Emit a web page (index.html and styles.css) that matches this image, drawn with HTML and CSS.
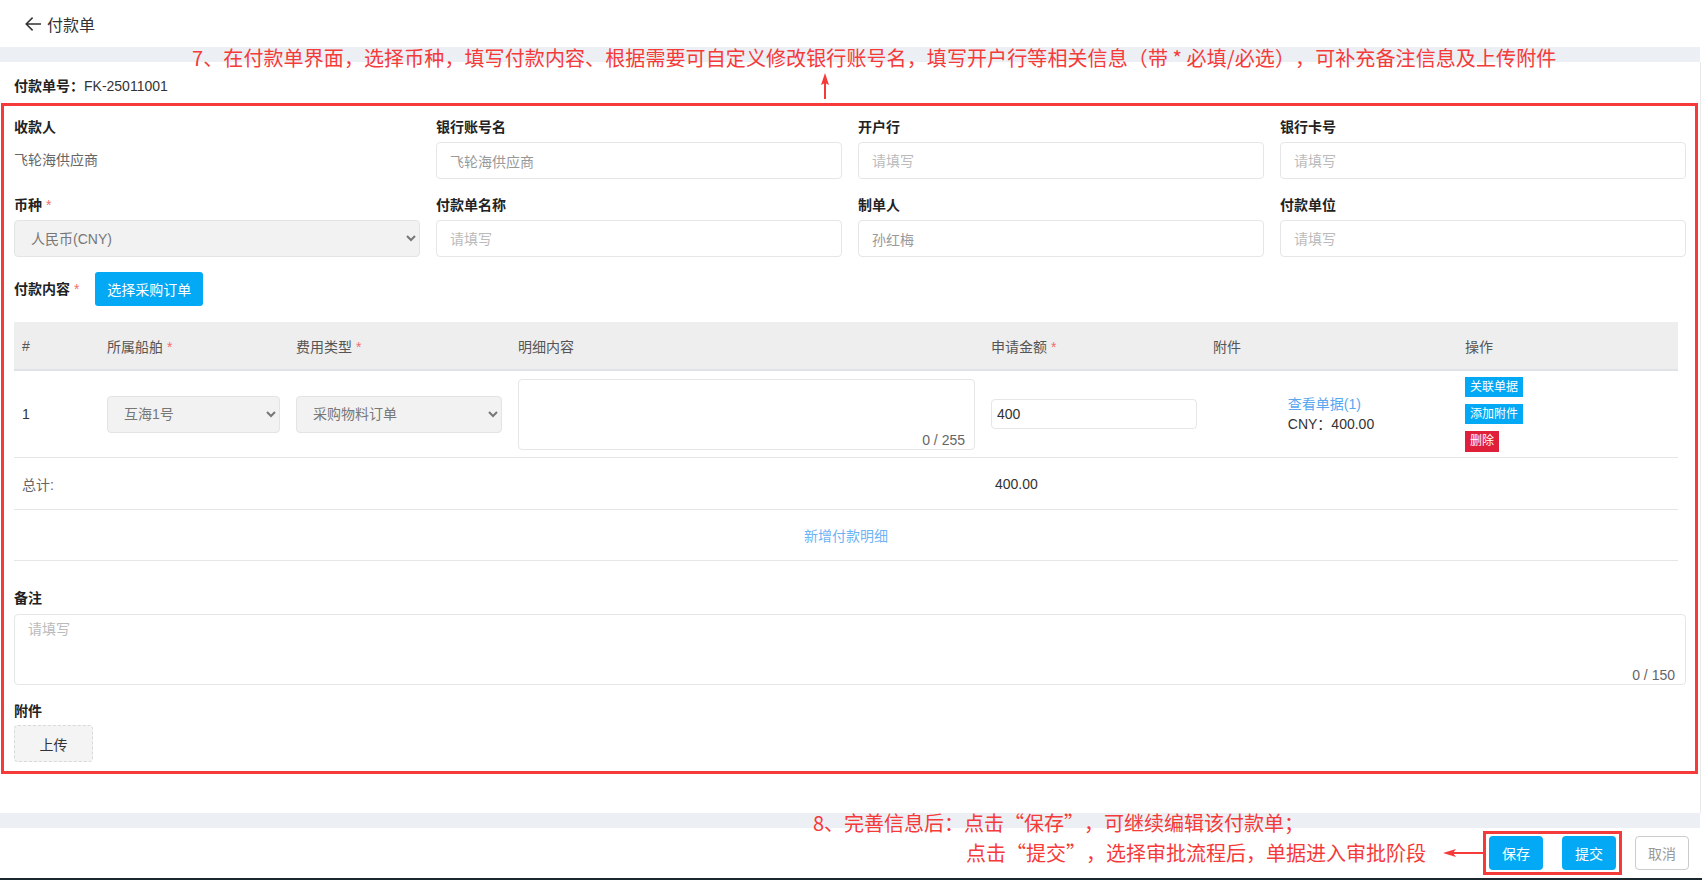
FILE: index.html
```html
<!DOCTYPE html>
<html lang="zh-CN">
<head>
<meta charset="utf-8">
<title>付款单</title>
<link rel="stylesheet" href="styles.css">
</head>
<body>
<div class="page">
  <header class="topbar">
    <svg class="back" width="18" height="16" viewBox="0 0 18 16"><path d="M17 8H2.2M8.6 1.6L2.2 8l6.4 6.4" fill="none" stroke="#333" stroke-width="1.5"/></svg>
    <span class="title">付款单</span>
  </header>
  <div class="band"></div>
  <main class="main">
    <div class="order-no"><b>付款单号：</b>FK-25011001</div>

    <div class="form-grid">
      <div class="field"><div class="lbl">收款人</div><div class="plain">飞轮海供应商</div></div>
      <div class="field"><div class="lbl">银行账号名</div><input class="ipt val" value="飞轮海供应商"></div>
      <div class="field"><div class="lbl">开户行</div><input class="ipt" placeholder="请填写"></div>
      <div class="field"><div class="lbl">银行卡号</div><input class="ipt" placeholder="请填写"></div>
      <div class="field"><div class="lbl">币种 <span class="req">*</span></div><select class="sel"><option>人民币(CNY)</option></select></div>
      <div class="field"><div class="lbl">付款单名称</div><input class="ipt" placeholder="请填写"></div>
      <div class="field"><div class="lbl">制单人</div><input class="ipt val" value="孙红梅"></div>
      <div class="field"><div class="lbl">付款单位</div><input class="ipt" placeholder="请填写"></div>
    </div>

    <div class="content-row">
      <span class="lbl">付款内容 <span class="req">*</span></span>
      <button class="btn-primary">选择采购订单</button>
    </div>

    <div class="detail">
      <div class="drow dhead">
        <div class="cell"><span>#</span></div>
        <div class="cell"><span>所属船舶 <span class="req">*</span></span></div>
        <div class="cell"><span>费用类型 <span class="req">*</span></span></div>
        <div class="cell"><span>明细内容</span></div>
        <div class="cell"><span>申请金额 <span class="req">*</span></span></div>
        <div class="cell"><span>附件</span></div>
        <div class="cell"><span>操作</span></div>
      </div>
      <div class="drow dbody">
        <div class="cell">1</div>
        <div class="cell"><select class="sel small"><option>互海1号</option></select></div>
        <div class="cell"><select class="sel small"><option>采购物料订单</option></select></div>
        <div class="cell"><div class="ta-wrap"><textarea class="ta"></textarea><span class="counter">0 / 255</span></div></div>
        <div class="cell"><input class="ipt amount" value="400"></div>
        <div class="cell center"><div class="attach"><a class="link">查看单据(1)</a><div>CNY：400.00</div></div></div>
        <div class="cell"><div class="ops"><button class="mini">关联单据</button><button class="mini">添加附件</button><button class="mini danger">删除</button></div></div>
      </div>
      <div class="drow dtotal">
        <div class="cell muted">总计:</div>
        <div class="cell"></div>
        <div class="cell"></div>
        <div class="cell"></div>
        <div class="cell total-val">400.00</div>
        <div class="cell"></div>
        <div class="cell"></div>
      </div>
      <div class="dadd"><a class="link">新增付款明细</a></div>
    </div>

    <div class="lbl remark-lbl">备注</div>
    <div class="ta-wrap remark">
      <textarea class="ta big" placeholder="请填写"></textarea>
      <span class="counter">0 / 150</span>
    </div>

    <div class="lbl attach-lbl">附件</div>
    <button class="upload">上传</button>
  </main>
  <div class="band"></div>
  <footer class="footer">
    <button class="fbtn primary">保存</button>
    <button class="fbtn primary">提交</button>
    <button class="fbtn ghost">取消</button>
  </footer>
  <div class="dark"></div>

  <div class="anno anno7">7、在付款单界面，选择币种，填写付款内容、根据需要可自定义修改银行账号名，填写开户行等相关信息（带 * 必填/必选），可补充备注信息及上传附件</div>
  <svg class="arrow-up" width="10" height="26" viewBox="0 0 10 26"><path d="M5 0L9 12L5 10L1 12Z" fill="#f53a3a"/><path d="M5 10V26" stroke="#f53a3a" stroke-width="2"/></svg>
  <div class="redbox main-box"></div>
  <div class="anno anno8a">8、完善信息后：点击“保存”，可继续编辑该付款单；</div>
  <div class="anno anno8b">点击“提交”，选择审批流程后，单据进入审批阶段</div>
  <svg class="arrow-left" width="40" height="10" viewBox="0 0 40 10"><path d="M0 5L13 1L10 5L13 9Z" fill="#f53a3a"/><path d="M10 5H40" stroke="#f53a3a" stroke-width="2"/></svg>
  <div class="redbox foot-box"></div>
</div>
</body>
</html>
```
FILE: styles.css
```css
* { box-sizing: border-box; }
html, body { margin: 0; padding: 0; }
body {
  font-family: "Liberation Sans", "Noto Sans CJK SC", sans-serif;
  font-size: 14px;
  color: #333;
  background: #fff;
  overflow: hidden;
}
.page {
  position: relative;
  width: 1702px;
  height: 880px;
  overflow: hidden;
}
button, input, select, textarea { font-family: inherit; font-size: 14px; }

.topbar {
  height: 47px;
  display: flex;
  align-items: center;
  gap: 5px;
  padding-left: 24px;
  font-size: 16px;
  color: #333;
}
.back { display: block; }
.band { height: 15px; background: #eceff3; margin-right: 2px; }

.main {
  height: 751px;
  padding: 16px 16px 0 14px;
  border-right: 1px solid #e8e8e8;
  margin-right: 1px;
}
.order-no { line-height: 16px; height: 16px; color: #333; }
.order-no b { color: #222; }

.form-grid {
  margin-top: 23px;
  display: grid;
  grid-template-columns: repeat(4, 406px);
  column-gap: 16px;
  row-gap: 16px;
}
.lbl { font-weight: 700; color: #222; line-height: 20px; height: 20px; }
.req { color: #f56c6c; font-weight: 400; }
.field .lbl { margin-bottom: 5px; }
.plain { line-height: 37px; height: 37px; color: #666; }
.ipt {
  height: 37px;
  width: 100%;
  border: 1px solid #e6e6e6;
  border-radius: 4px;
  padding: 0 13px;
  color: #333;
  background: #fff;
  outline: none;
}
.ipt::placeholder { color: #bbb; }
.ipt.val { color: #999; }
.sel {
  height: 37px;
  width: 100%;
  border: 1px solid #e4e4e4;
  border-radius: 4px;
  background-color: #f2f2f2;
  color: #777;
  padding: 0 8px 0 12px;
  outline: none;
}

.content-row {
  margin-top: 15px;
  display: flex;
  align-items: center;
  gap: 16px;
  height: 34px;
}
.btn-primary {
  height: 34px;
  padding: 0 12px;
  background: #03a9f4;
  color: #fff;
  border: none;
  border-radius: 3px;
}

.detail { margin-top: 16px; width: 1664px; }
.drow {
  display: grid;
  grid-template-columns: 85px 189px 222px 473px 222px 252px 221px;
  border-bottom: 1px solid #e6e6e6;
}
.cell { padding: 0 8px; display: flex; align-items: center; min-width: 0; }
.cell.center { justify-content: center; }
.dhead { height: 49px; background: #eeeeee; border-bottom: 2px solid #dfe3e8; color: #555; }
.dbody { height: 87px; }
.dtotal { height: 52px; }
.muted { color: #666; }
.total-val { padding-left: 12px; color: #333; }
.dadd {
  height: 51px;
  border-bottom: 1px solid #e6e6e6;
  display: flex;
  align-items: center;
  justify-content: center;
}
.link { color: #5aa7f0; text-decoration: none; }
.dadd .link { color: #6eb3f5; }

.ta-wrap { position: relative; width: 100%; }
.ta {
  display: block;
  width: 100%;
  height: 71px;
  border: 1px solid #e6e6e6;
  border-radius: 4px;
  resize: none;
  outline: none;
  padding: 6px 13px;
  line-height: 16px;
  color: #333;
}
.ta::placeholder { color: #bbb; }
.counter {
  position: absolute;
  right: 10px;
  bottom: 2px;
  line-height: 16px;
  color: #666;
  font-size: 14px;
}
.amount { height: 30px; padding: 0 5px; }
.attach { line-height: 20px; color: #333; }
.ops { display: flex; flex-direction: column; align-items: flex-start; gap: 7px; }
.mini {
  height: 20px;
  padding: 0 5px;
  font-size: 12px;
  line-height: 20px;
  background: #03a9f4;
  color: #fff;
  border: none;
  border-radius: 0;
}
.mini.danger { background: #e0203a; height: 21px; }

.remark-lbl { margin-top: 27px; }
.remark { margin-top: 6px; width: 1672px; }
.remark .counter { right: 11px; }
.attach-lbl { margin-top: 16px; }
.upload {
  margin-top: 4px;
  width: 79px;
  height: 37px;
  background: #f4f4f4;
  border: 1px dashed #d9d9d9;
  border-radius: 4px;
  color: #333;
}

.footer {
  height: 50px;
  display: flex;
  align-items: center;
  justify-content: flex-end;
  gap: 19px;
  padding-right: 13px;
}
.fbtn {
  width: 54px;
  height: 34px;
  border-radius: 4px;
  font-size: 14px;
}
.fbtn.primary { background: #03a9f4; color: #fff; border: none; }
.fbtn.ghost { background: #fff; color: #999; border: 1px solid #ccc; }
.dark { height: 3px; background: #1c2830; }

/* annotation overlays */
.anno {
  position: absolute;
  color: #f53a3a;
  font-size: 20px;
  line-height: 22px;
  white-space: nowrap;
  font-family: "Noto Sans CJK SC", sans-serif;
  text-spacing-trim: space-all;
}
.anno7 { left: 192px; top: 47px; letter-spacing: 0.1px; }
.anno8a { left: 813px; top: 812px; }
.anno8b { left: 966px; top: 842px; }
.arrow-up { position: absolute; left: 820px; top: 73px; }
.arrow-left { position: absolute; left: 1443px; top: 848px; }
.redbox { position: absolute; border: 3px solid #f53a3a; pointer-events: none; }
.main-box { left: 1px; top: 103px; width: 1697px; height: 671px; }
.foot-box { left: 1483px; top: 831px; width: 139px; height: 44px; }
```
